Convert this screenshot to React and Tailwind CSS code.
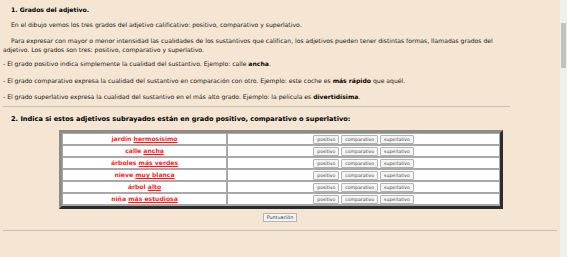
const rows = [
  { noun: 'jardín', adj: 'hermosísimo' },
  { noun: 'calle', adj: 'ancha' },
  { noun: 'árboles', adj: 'más verdes' },
  { noun: 'nieve', adj: 'muy blanca' },
  { noun: 'árbol', adj: 'alto' },
  { noun: 'niña', adj: 'más estudiosa' },
];

const Btn = ({ children }) => (
  <button className="h-[9px] px-[3px] border border-[#b4b4b4] bg-[#f4f4f4] text-[4.6px] leading-[7px] text-[#444] rounded-[1px]">
    {children}
  </button>
);

export default function App() {
  return (
    <div className="flex h-[257px] w-[567px] overflow-hidden bg-[#f5e6d3] text-[#161616] font-['DejaVu_Sans',sans-serif] text-[6.1px]">
      <div className="w-[560px]">
        {/* Section 1 */}
        <h1 className="mt-[5px] pl-[11px] text-[6.1px] font-bold leading-[9px] text-black">1. Grados del adjetivo.</h1>
        <div className="w-[510px] pl-[3px] leading-[9px]">
          <p className="mt-[6px] indent-[8px]">
            En el dibujo vemos los tres grados del adjetivo calificativo: positivo, comparativo y superlativo.
          </p>
          <p className="mt-[7px] indent-[8px]">
            Para expresar con mayor o menor intensidad las cualidades de los sustantivos que califican, los adjetivos pueden tener distintas formas, llamadas grados del adjetivo. Los grados son tres: positivo, comparativo y superlativo.
          </p>
          <p className="mt-[5px]">
            - El grado positivo indica simplemente la cualidad del sustantivo. Ejemplo: calle <b className="text-black">ancha</b>.
          </p>
          <p className="mt-[8px]">
            - El grado comparativo expresa la cualidad del sustantivo en comparación con otro. Ejemplo: este coche es <b className="text-black">más rápido</b> que aquél.
          </p>
          <p className="mt-[7px]">
            - El grado superlativo expresa la cualidad del sustantivo en el más alto grado. Ejemplo: la película es <b className="text-black">divertidísima</b>.
          </p>
          <div className="mt-[5px] h-[1px] bg-[#c6c0b8]" />
        </div>

        {/* Section 2 */}
        <h2 className="mt-[8px] pl-[11px] text-[6.6px] font-bold leading-[9px] text-black">
          2. Indica si estos adjetivos subrayados están en grado positivo, comparativo o superlativo:
        </h2>
        <div className="mt-[6px] ml-[59px] w-[444px] border-[3px] border-t-[#8c8c8c] border-l-[#8c8c8c] border-r-[#2c2c2c] border-b-[#2c2c2c] bg-[#a8a8a8] pt-[1px] pb-[2px] px-[1px]">
          <div className="flex flex-col gap-[2px]">
            {rows.map((r, i) => (
              <div key={i} className="flex gap-[2px] h-[10px]">
                <div className="w-[163px] bg-white flex items-center justify-center font-bold text-[#ff1a1a] text-[6.1px]">
                  <span>{r.noun}</span>&nbsp;<span className="underline">{r.adj}</span>
                </div>
                <div className="flex-1 bg-white flex items-center justify-center gap-[2px]">
                  <Btn>positivo</Btn>
                  <Btn>comparativo</Btn>
                  <Btn>superlativo</Btn>
                </div>
              </div>
            ))}
          </div>
        </div>
        <div className="mt-[4px] flex justify-center">
          <button className="h-[9px] px-[3px] border border-[#b4b4b4] bg-[#f4f4f4] text-[4.8px] leading-[7px] text-[#333]">Puntuación</button>
        </div>
        <div className="mt-[8px] ml-[3px] w-[554px] h-[1px] bg-[#c6c0b8]" />
      </div>
      <div className="w-[7px] bg-[#f0f0f0] pt-[23px]">
        <div className="mx-auto w-[5px] h-[45px] bg-[#c1c1c1]" />
      </div>
    </div>
  );
}
